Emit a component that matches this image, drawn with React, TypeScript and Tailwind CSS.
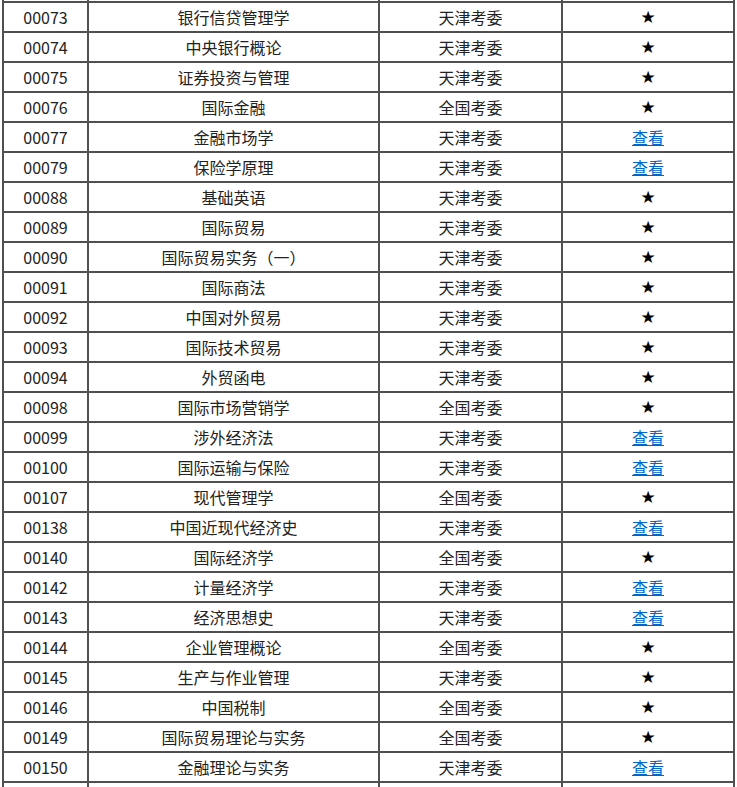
import React from 'react';

type Row = [string, string, string, boolean];

const rows: Row[] = [
    ['00073', '银行信贷管理学', '天津考委', false],
    ['00074', '中央银行概论', '天津考委', false],
    ['00075', '证券投资与管理', '天津考委', false],
    ['00076', '国际金融', '全国考委', false],
    ['00077', '金融市场学', '天津考委', true],
    ['00079', '保险学原理', '天津考委', true],
    ['00088', '基础英语', '天津考委', false],
    ['00089', '国际贸易', '天津考委', false],
    ['00090', '国际贸易实务（一）', '天津考委', false],
    ['00091', '国际商法', '天津考委', false],
    ['00092', '中国对外贸易', '天津考委', false],
    ['00093', '国际技术贸易', '天津考委', false],
    ['00094', '外贸函电', '天津考委', false],
    ['00098', '国际市场营销学', '全国考委', false],
    ['00099', '涉外经济法', '天津考委', true],
    ['00100', '国际运输与保险', '天津考委', true],
    ['00107', '现代管理学', '全国考委', false],
    ['00138', '中国近现代经济史', '天津考委', true],
    ['00140', '国际经济学', '全国考委', false],
    ['00142', '计量经济学', '天津考委', true],
    ['00143', '经济思想史', '天津考委', true],
    ['00144', '企业管理概论', '全国考委', false],
    ['00145', '生产与作业管理', '天津考委', false],
    ['00146', '中国税制', '全国考委', false],
    ['00149', '国际贸易理论与实务', '全国考委', false],
    ['00150', '金融理论与实务', '天津考委', true],
];

const cell = 'border-2 border-[#505050] h-[30px] p-0 text-center align-middle';

const App = () => {
    return (
        <div className="h-[787px] overflow-hidden bg-white pl-[2px] text-[16px] text-[#222] font-['Noto_Sans_CJK_SC','Microsoft_YaHei',sans-serif]">
            <table className="-mt-[29px] w-[731px] table-fixed border-collapse leading-none">
                <colgroup>
                    <col className="w-[85px]" />
                    <col className="w-[291px]" />
                    <col className="w-[183px]" />
                    <col className="w-[172px]" />
                </colgroup>
                <tbody>
                    <tr>
                        <td className={cell}></td>
                        <td className={cell}></td>
                        <td className={cell}></td>
                        <td className={cell}></td>
                    </tr>
                    {rows.map(([code, name, org, link]) => (
                        <tr key={code}>
                            <td className={cell}>{code}</td>
                            <td className={cell}>{name}</td>
                            <td className={cell}>{org}</td>
                            <td className={cell}>
                                {link ? (
                                    <a className="text-[#0066cc] underline" href="#">查看</a>
                                ) : (
                                    <span className="text-[17px] text-black font-['DejaVu_Sans',sans-serif]">★</span>
                                )}
                            </td>
                        </tr>
                    ))}
                    <tr>
                        <td className={cell}></td>
                        <td className={cell}></td>
                        <td className={cell}></td>
                        <td className={cell}></td>
                    </tr>
                </tbody>
            </table>
        </div>
    );
};

export default App;
